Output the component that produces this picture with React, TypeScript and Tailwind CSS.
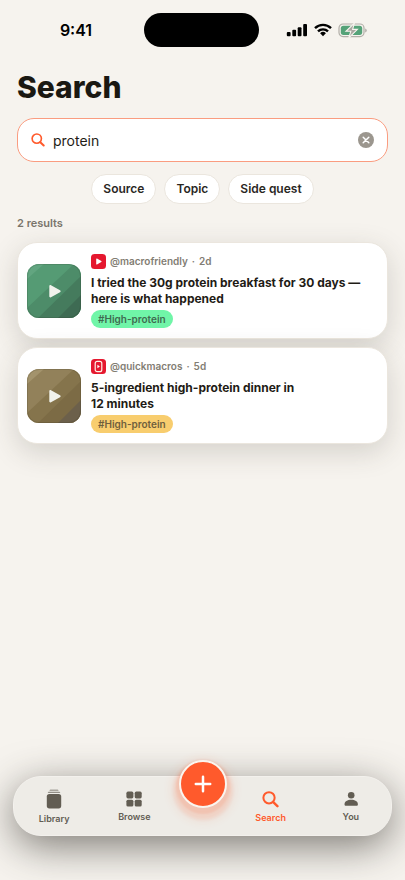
import React, { useState } from "react";
import { clsx } from "clsx";

type Result = {
  handle: string;
  age: string;
  title: React.ReactNode;
  source: "youtube" | "shorts";
  tagClass: string;
  tones: string[];
};

const filters = ["Source", "Topic", "Side quest"];

const results: Result[] = [
  {
    handle: "@macrofriendly",
    age: "2d",
    title: "I tried the 30g protein breakfast for 30 days — here is what happened",
    source: "youtube",
    tagClass: "bg-[#70f5a8] text-[#3f6b50]",
    tones: ["#62a580", "#559b74", "#4d8c69", "#457b5d", "#3e6b53"],
  },
  {
    handle: "@quickmacros",
    age: "5d",
    title: (
      <>
        5-ingredient high-protein dinner in
        <br />
        12 minutes
      </>
    ),
    source: "shorts",
    tagClass: "bg-[#f8cd6e] text-[#6f5f3d]",
    tones: ["#a3936c", "#92815a", "#85744c", "#7c6b45", "#6c604b"],
  },
];

const StatusBar = () => {
  return (
    <div className="flex h-[60px] items-center">
      <div className="flex-1 pl-2 text-center text-[16px] font-semibold text-black">9:41</div>
      <div className="h-[34px] w-[115px] rounded-full bg-black" />
      <div className="flex flex-1 items-center justify-center gap-1.5 pr-2.5">
        <svg width="22" height="14" viewBox="0 0 22 14" fill="#000" aria-hidden="true">
          <rect x="0.8" y="9" width="3.8" height="4.3" rx="1" />
          <rect x="6.3" y="6.7" width="3.8" height="6.6" rx="1" />
          <rect x="11.7" y="4.2" width="3.8" height="9.1" rx="1" />
          <rect x="17.2" y="1" width="3.8" height="12.3" rx="1" />
        </svg>
        <svg width="18" height="14" viewBox="0 0 18 14" aria-hidden="true">
          <g fill="none" stroke="#000" strokeWidth="2.4">
            <path d="M1 5.2a11.4 11.4 0 0 1 16 0" />
            <path d="M4 8.4a7.1 7.1 0 0 1 10 0" />
          </g>
          <path d="M9 13.2 6.1 10.3a4.1 4.1 0 0 1 5.8 0z" fill="#000" />
        </svg>
        <svg width="30" height="15" viewBox="0 0 30 15" aria-hidden="true">
          <rect x="1" y="1" width="25" height="12.6" rx="4" fill="none" stroke="#b2aea8" strokeWidth="1.2" />
          <rect x="2.8" y="2.7" width="21.4" height="9.2" rx="2.6" fill="#55a278" />
          <path d="M27.4 5.4v4a2.3 2.3 0 0 0 0-4z" fill="#9b9791" />
          <path d="M16.5 0 8 8.3h4.8L10.7 15 19.4 6.4h-4.8z" fill="#aaa7a1" stroke="#f6f3ee" strokeWidth="1.1" />
        </svg>
      </div>
    </div>
  );
};

const SearchIcon = ({ size }: { size: number }) => (
  <svg width={size} height={size} viewBox="0 0 16 16" fill="none" stroke="currentColor" aria-hidden="true">
    <circle cx="6.6" cy="6.4" r="5.3" strokeWidth="1.9" />
    <path d="m10.6 10.5 3.9 3.8" strokeWidth="2.3" strokeLinecap="round" />
  </svg>
);

const SourceIcon = ({ source }: { source: Result["source"] }) => (
  <svg width="15" height="15" viewBox="0 0 15 15" aria-hidden="true">
    <rect width="15" height="15" rx="3.5" fill="#e5182f" />
    {source === "youtube" ? (
      <path d="M5.2 5c0-.5.4-.7.8-.5l4.3 2.5c.4.2.4.8 0 1L6 10.5c-.4.2-.8 0-.8-.5z" fill="#fff" />
    ) : (
      <>
        <rect x="4.2" y="2.3" width="6.6" height="10.4" rx="2" fill="none" stroke="#fff3e8" strokeWidth="1.2" />
        <path d="M6.4 5.8 8.9 7.5 6.4 9.2z" fill="#fff" />
      </>
    )}
  </svg>
);

const Thumbnail = ({ id, tones }: { id: string; tones: string[] }) => (
  <svg width="54" height="54" viewBox="0 0 54 54" className="shrink-0" aria-hidden="true">
    <defs>
      <clipPath id={id}>
        <rect width="54" height="54" rx="12" />
      </clipPath>
    </defs>
    <g clipPath={`url(#${id})`}>
      <rect width="54" height="54" fill={tones[1]} />
      <path d="M0 0h17L0 15z" fill={tones[0]} />
      <path d="M47 0h7v54H0V44z" fill={tones[2]} />
      <path d="M54 12v42H11z" fill={tones[3]} />
      <path d="M54 31v23H31z" fill={tones[4]} />
    </g>
    <rect x="0.5" y="0.5" width="53" height="53" rx="11.5" fill="none" stroke="#2c2a20" strokeOpacity="0.16" />
    <path
      d="M22.3 22.2c0-1 .9-1.5 1.7-1l9 5c.9.5.9 1.5 0 2l-9 5c-.8.5-1.7 0-1.7-1z"
      fill="#f1f2ec"
    />
  </svg>
);

const ResultCard = ({ result }: { result: Result }) => {
  return (
    <li className="flex items-center gap-2.5 rounded-[20px] border border-[#ebe6de] bg-white py-2.5 pr-4 pl-[9px] shadow-[0_8px_28px_rgba(60,55,45,0.18)]">
      <Thumbnail id={result.source} tones={result.tones} />
      <div className="min-w-0 flex-1">
        <div className="flex h-[17px] items-center gap-1 text-[10px] font-semibold text-[#827d73]">
          <SourceIcon source={result.source} />
          <span>{result.handle}</span>
          <span>·</span>
          <span>{result.age}</span>
        </div>
        <h2 className="mt-[5px] text-[12px] leading-4 font-bold text-[#1f1c16]">{result.title}</h2>
        <span
          className={clsx(
            "mt-[3px] flex h-[18px] w-fit items-center rounded-full px-[7px] text-[10px] font-semibold",
            result.tagClass
          )}
        >
          #High-protein
        </span>
      </div>
    </li>
  );
};

const LibraryIcon = () => (
  <svg width="16" height="20" viewBox="0 0 16 20" fill="currentColor" aria-hidden="true">
    <path d="M4.3.8h7.4c.5 0 .8.3.8.8H3.5c0-.5.3-.8.8-.8z" />
    <path d="M3 2.7h10c.7 0 1.2.6 1.2 1.3H1.8c0-.7.5-1.3 1.2-1.3z" opacity="0.65" />
    <rect x="0.8" y="5" width="14.4" height="14.4" rx="2.6" />
  </svg>
);

const BrowseIcon = () => (
  <svg width="16" height="16" viewBox="0 0 16 16" fill="currentColor" aria-hidden="true">
    <rect x="0.4" y="0.6" width="7" height="6.8" rx="1.6" />
    <rect x="8.7" y="0.6" width="7" height="6.8" rx="1.6" />
    <rect x="0.4" y="8.7" width="7" height="6.8" rx="1.6" />
    <rect x="8.7" y="8.7" width="7" height="6.8" rx="1.6" />
  </svg>
);

const YouIcon = () => (
  <svg width="16" height="16" viewBox="0 0 16 16" fill="currentColor" aria-hidden="true">
    <circle cx="8.2" cy="4.3" r="3.3" />
    <path d="M1.5 13.4c0-3 3-4.6 6.7-4.6s6.7 1.6 6.7 4.6c0 .9-.6 1.4-1.5 1.4H3c-.9 0-1.5-.5-1.5-1.4z" />
  </svg>
);

const Tab = ({ label, active, children }: { label: string; active?: boolean; children: React.ReactNode }) => (
  <a
    href={`#${label.toLowerCase()}`}
    aria-current={active ? "page" : undefined}
    className={clsx(
      "flex flex-1 flex-col items-center gap-1 pt-0.5 text-[9px] leading-3 font-semibold",
      active ? "text-[#ff5a2c]" : "text-[#625d53]"
    )}
  >
    {children}
    <span>{label}</span>
  </a>
);

const TabBar = () => {
  return (
    <nav className="mx-[13px] mt-auto mb-11 flex h-[60px] items-center rounded-[28px] border border-[#f3f1ed] bg-[#eeece7] shadow-[0_10px_40px_rgba(50,47,40,0.62)]">
      <Tab label="Library">
        <LibraryIcon />
      </Tab>
      <Tab label="Browse">
        <BrowseIcon />
      </Tab>
      <button
        type="button"
        aria-label="Add"
        className="mx-1 mb-11 flex size-12 shrink-0 items-center justify-center rounded-full border-2 border-[#faf5ef] bg-[#ff5a2c] shadow-[0_3px_2px_3px_rgba(255,90,44,0.12),0_6px_3px_6px_rgba(255,90,44,0.1),0_6px_10px_8px_rgba(255,90,44,0.08)]"
      >
        <svg width="18" height="18" viewBox="0 0 18 18" stroke="#fff" strokeWidth="2.5" strokeLinecap="round" aria-hidden="true">
          <path d="M9 1.8v14.4M1.8 9h14.4" />
        </svg>
      </button>
      <Tab label="Search" active>
        <SearchIcon size={17} />
      </Tab>
      <Tab label="You">
        <YouIcon />
      </Tab>
    </nav>
  );
};

const App = () => {
  const [query, setQuery] = useState("protein");

  return (
    <div className="flex min-h-screen flex-col overflow-hidden bg-[#f6f3ee] font-['Inter',sans-serif]">
      <StatusBar />
      <main className="px-[17px]">
        <h1 className="mt-2 text-[30px] leading-[38px] font-extrabold text-[#1a1812]">Search</h1>

        <div className="mt-3 flex h-11 items-center gap-2 rounded-[17px] border border-[#fa9c80] bg-white px-[13px] text-[#ff5a2c]">
          <SearchIcon size={14} />
          <input
            type="text"
            aria-label="Search"
            value={query}
            onChange={(e) => setQuery(e.target.value)}
            className="min-w-0 flex-1 bg-transparent text-[14px] text-[#1f1c16] outline-none"
          />
          <button type="button" aria-label="Clear" onClick={() => setQuery("")}>
            <svg width="16" height="16" viewBox="0 0 16 16" aria-hidden="true">
              <circle cx="8" cy="8" r="8" fill="#9b968e" />
              <path d="m5.2 5.2 5.6 5.6m0-5.6-5.6 5.6" stroke="#fff" strokeWidth="1.5" strokeLinecap="round" />
            </svg>
          </button>
        </div>

        <div className="mt-3 flex justify-center gap-2">
          {filters.map((filter) => (
            <button
              key={filter}
              type="button"
              className="h-[30px] rounded-full border border-[#ebe6de] bg-white px-[11px] text-[12px] font-semibold text-[#2a271f]"
            >
              {filter}
            </button>
          ))}
        </div>

        <p className="mt-[11px] text-[11px] leading-4 font-semibold text-[#7a756b]">2 results</p>

        <ul className="mt-[11px] flex flex-col gap-2">
          {results.map((result) => (
            <ResultCard key={result.handle} result={result} />
          ))}
        </ul>
      </main>
      <TabBar />
    </div>
  );
};

export default App;
